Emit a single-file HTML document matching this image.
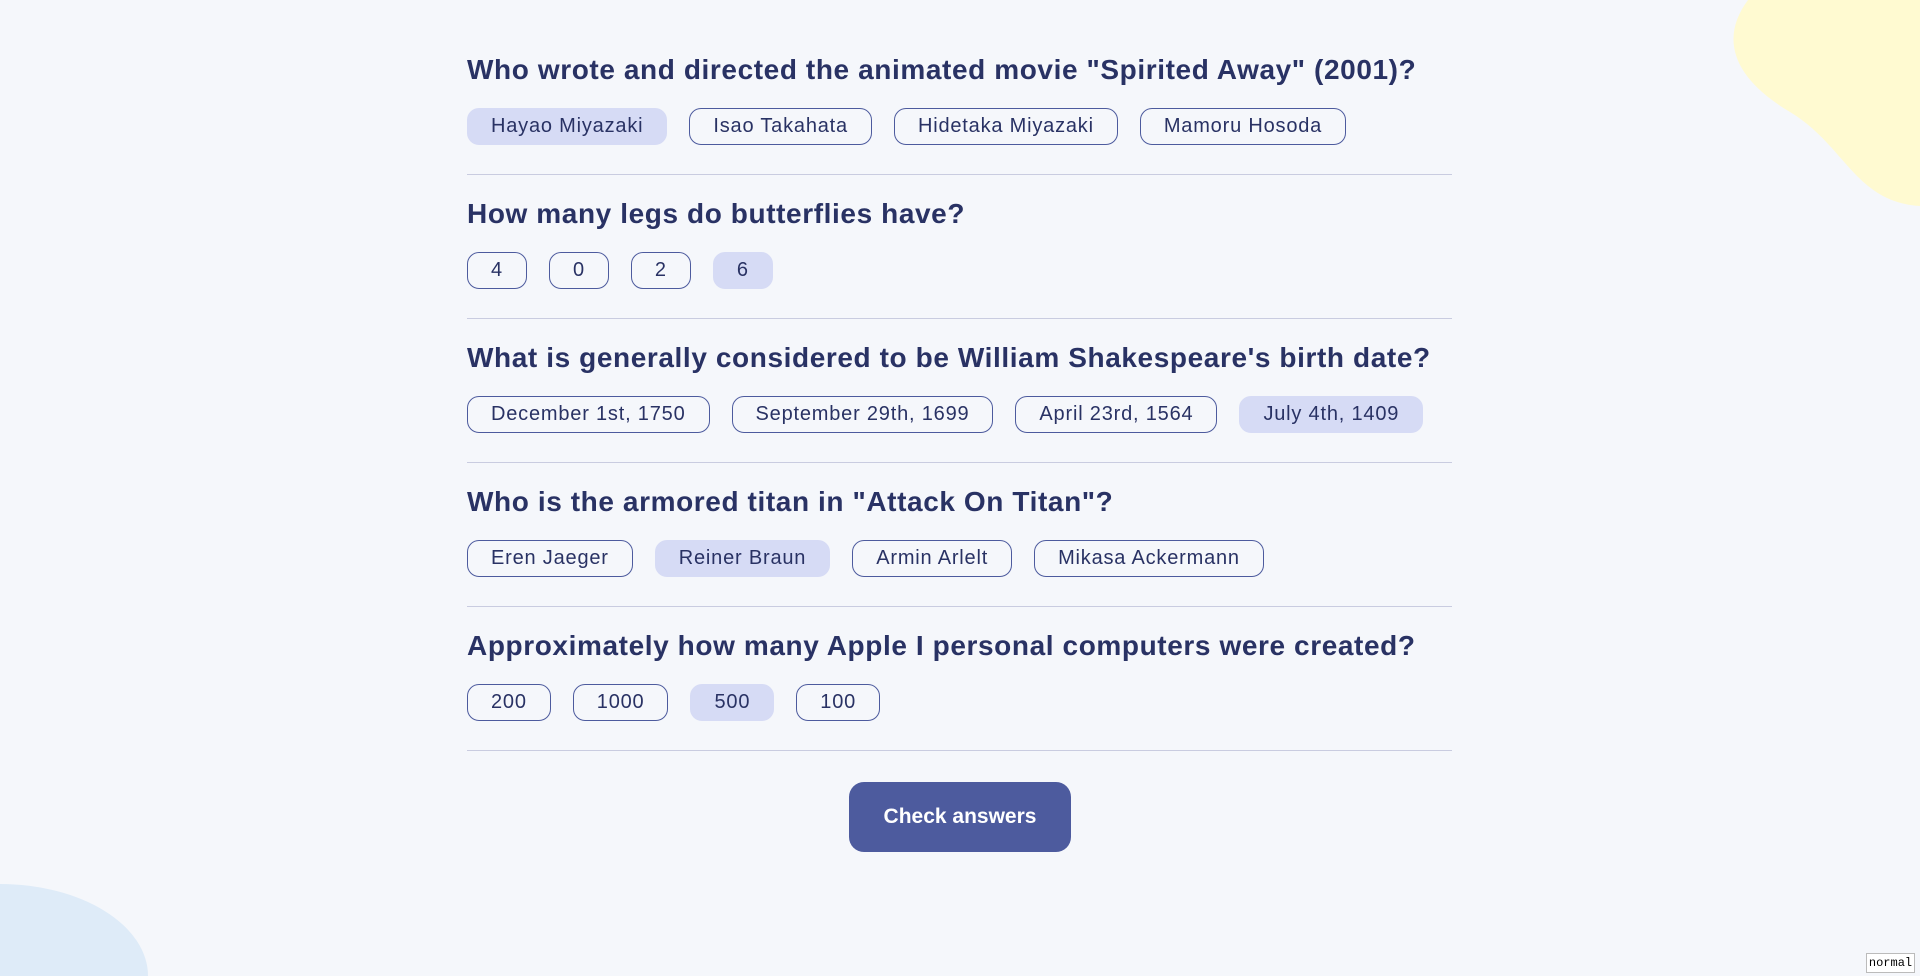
<!DOCTYPE html>
<html><head><meta charset="utf-8"><style>
html,body{margin:0;padding:0;width:1920px;height:976px;overflow:hidden}
body{background:#f5f7fb;font-family:"Liberation Sans",sans-serif}
.wrap{position:relative;width:1920px;height:976px;overflow:hidden}
svg.bg{position:absolute;left:0;top:0}
.blob2{position:absolute;left:0;top:884px;width:148px;height:92px;background:#deebf8;border-radius:0 100% 0 0/0 100% 0 0;}
.sec{position:absolute;left:467px;width:985px;height:144px}
.sec h2{position:absolute;top:0;left:0;margin:0;font-size:28px;line-height:30px;font-weight:bold;color:#293264;white-space:nowrap;letter-spacing:0.6px}
.opts{position:absolute;top:53px;left:0;display:flex;gap:22px}
.b{box-sizing:border-box;height:37px;line-height:35px;padding:0 23px;border:1px solid #4d5b9e;border-radius:12px;font-size:20px;color:#293264;background:transparent;letter-spacing:0.8px;white-space:nowrap}
.b.s{background:#d6dbf5;border-color:#d6dbf5}
.hr{position:absolute;top:119px;left:0;width:985px;height:1px;background:#c9cce0}
.btn{position:absolute;left:849px;top:782px;width:222px;height:70px;background:#4d5b9e;border-radius:15px;color:#fff;font-size:21px;font-weight:bold;text-align:center;line-height:70px}
.norm{position:absolute;left:1866px;top:953px;width:47px;height:18px;border:1px solid #bbb;background:#fff;font-family:"Liberation Mono",monospace;font-size:12px;line-height:18px;text-align:center;color:#000}
</style></head><body><div class="wrap">
<svg class="bg" width="1920" height="976"><path d="M1748,0 C1722,35 1728,75 1790,112 C1845,145 1855,202 1920,206 L1920,0 Z" fill="#fffad1"/></svg>
<div class="blob2"></div>
<div class="sec" style="top:55px"><h2>Who wrote and directed the animated movie "Spirited Away" (2001)?</h2>
<div class="opts"><div class="b s">Hayao Miyazaki</div><div class="b">Isao Takahata</div><div class="b">Hidetaka Miyazaki</div><div class="b">Mamoru Hosoda</div></div><div class="hr"></div></div>
<div class="sec" style="top:199px"><h2>How many legs do butterflies have?</h2>
<div class="opts"><div class="b">4</div><div class="b">0</div><div class="b">2</div><div class="b s">6</div></div><div class="hr"></div></div>
<div class="sec" style="top:343px"><h2>What is generally considered to be William Shakespeare's birth date?</h2>
<div class="opts"><div class="b">December 1st, 1750</div><div class="b">September 29th, 1699</div><div class="b">April 23rd, 1564</div><div class="b s">July 4th, 1409</div></div><div class="hr"></div></div>
<div class="sec" style="top:487px"><h2>Who is the armored titan in "Attack On Titan"?</h2>
<div class="opts"><div class="b">Eren Jaeger</div><div class="b s">Reiner Braun</div><div class="b">Armin Arlelt</div><div class="b">Mikasa Ackermann</div></div><div class="hr"></div></div>
<div class="sec" style="top:631px"><h2>Approximately how many Apple I personal computers were created?</h2>
<div class="opts"><div class="b">200</div><div class="b">1000</div><div class="b s">500</div><div class="b">100</div></div><div class="hr"></div></div>
<div class="btn">Check answers</div>
<div class="norm">normal</div>
</div></body></html>
